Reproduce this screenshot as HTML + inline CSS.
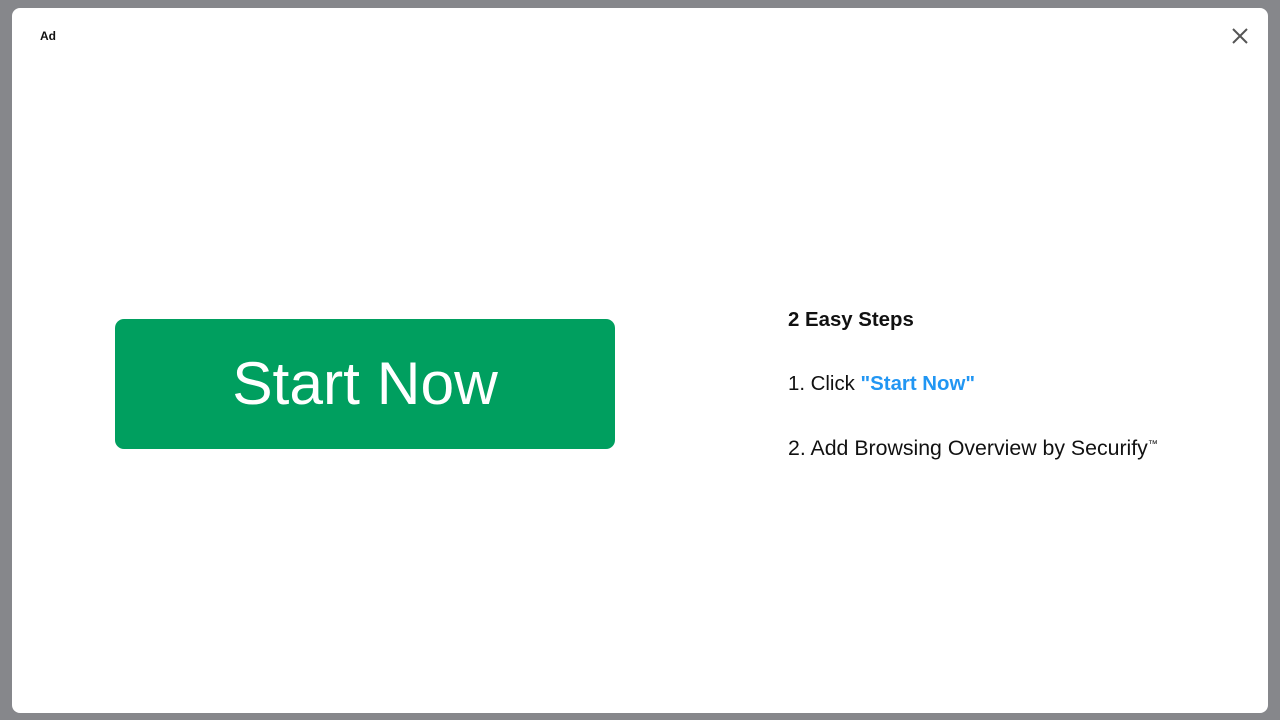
<!DOCTYPE html>
<html><head><style>
html,body{margin:0;padding:0;width:1280px;height:720px;overflow:hidden;background:#86878b;font-family:"Liberation Sans",sans-serif;}
.m{position:absolute;left:12px;top:8px;width:1256px;height:705px;background:#fff;border-radius:8px;}
.ad{position:absolute;left:28px;top:21px;font-size:12px;font-weight:bold;color:#111;}
.x{position:absolute;left:1219px;top:19px;}
.btn{position:absolute;left:103px;top:311px;width:500px;height:130px;background:#009f5f;border-radius:9px;color:#fff;font-size:60.5px;text-align:center;line-height:128px;}
.t{position:absolute;left:776px;font-size:20.4px;color:#111;white-space:nowrap;}
</style></head><body>
<div class="m">
<div class="ad">Ad</div>
<svg class="x" width="18" height="18" viewBox="0 0 18 18"><path d="M2 2L16 16M16 2L2 16" stroke="#555" stroke-width="2"/></svg>
<div class="btn">Start Now</div>
<div class="t" style="top:301px;font-weight:bold">2 Easy Steps</div>
<div class="t" style="top:365px">1. Click <b style="color:#2196f3">"Start Now"</b></div>
<div class="t" style="top:428px;font-size:21.3px">2. Add Browsing Overview by Securify<sup style="font-size:10px">™</sup></div>
</div>
</body></html>
